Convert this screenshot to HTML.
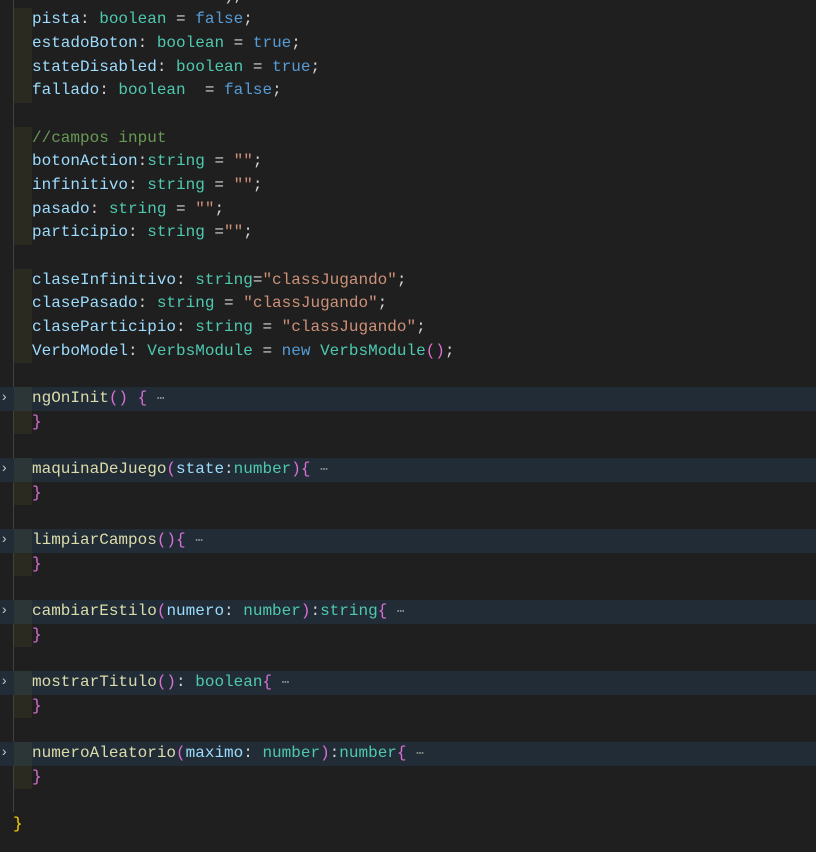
<!DOCTYPE html>
<html><head><meta charset="utf-8"><style>
html,body{margin:0;padding:0;background:#1f1f1f;width:816px;height:852px;overflow:hidden}
#ed{position:absolute;left:0;top:-15.5px;width:816px;font-family:"Liberation Mono",monospace;font-size:16px;color:#d4d4d4}
.l{position:relative;height:23.68px;line-height:23.68px;white-space:pre;padding-left:32px}
.l.i::before{content:"";position:absolute;left:14px;top:0;width:18px;height:100%;background:#2a2a21}
.l.f{background:#222c36}
.l.f::before{content:"";position:absolute;left:14px;top:0;width:18px;height:100%;background:#2c3636}
.l.f::after{content:"›";position:absolute;left:0;top:0;color:#c5c5c5;font-size:14px;line-height:23.68px}
.guide{position:absolute;left:13px;top:0;width:1px;height:812px;background:#404040}
.p{color:#9cdcfe}.t{color:#4ec9b0}.k{color:#569cd6}.s{color:#ce9178}.c{color:#6a9955}.fn{color:#dcdcaa}.o{color:#da70d6}.g{color:#ffd700}.d{color:#8c8c8c;font-size:13px}
</style></head><body>
<div class="guide"></div>
<div id="ed">
<div class="l">                    ),</div>
<div class="l i"><span class="p">pista</span>: <span class="t">boolean</span> = <span class="k">false</span>;</div>
<div class="l i"><span class="p">estadoBoton</span>: <span class="t">boolean</span> = <span class="k">true</span>;</div>
<div class="l i"><span class="p">stateDisabled</span>: <span class="t">boolean</span> = <span class="k">true</span>;</div>
<div class="l i"><span class="p">fallado</span>: <span class="t">boolean</span>  = <span class="k">false</span>;</div>
<div class="l"></div>
<div class="l i"><span class="c">//campos input</span></div>
<div class="l i"><span class="p">botonAction</span>:<span class="t">string</span> = <span class="s">""</span>;</div>
<div class="l i"><span class="p">infinitivo</span>: <span class="t">string</span> = <span class="s">""</span>;</div>
<div class="l i"><span class="p">pasado</span>: <span class="t">string</span> = <span class="s">""</span>;</div>
<div class="l i"><span class="p">participio</span>: <span class="t">string</span> =<span class="s">""</span>;</div>
<div class="l"></div>
<div class="l i"><span class="p">claseInfinitivo</span>: <span class="t">string</span>=<span class="s">"classJugando"</span>;</div>
<div class="l i"><span class="p">clasePasado</span>: <span class="t">string</span> = <span class="s">"classJugando"</span>;</div>
<div class="l i"><span class="p">claseParticipio</span>: <span class="t">string</span> = <span class="s">"classJugando"</span>;</div>
<div class="l i"><span class="p">VerboModel</span>: <span class="t">VerbsModule</span> = <span class="k">new</span> <span class="t">VerbsModule</span><span class="o">()</span>;</div>
<div class="l"></div>
<div class="l f"><span class="fn">ngOnInit</span><span class="o">()</span> <span class="o">{</span> <span class="d">⋯</span></div>
<div class="l i"><span class="o">}</span></div>
<div class="l"></div>
<div class="l f"><span class="fn">maquinaDeJuego</span><span class="o">(</span><span class="p">state</span>:<span class="t">number</span><span class="o">){</span> <span class="d">⋯</span></div>
<div class="l i"><span class="o">}</span></div>
<div class="l"></div>
<div class="l f"><span class="fn">limpiarCampos</span><span class="o">(){</span> <span class="d">⋯</span></div>
<div class="l i"><span class="o">}</span></div>
<div class="l"></div>
<div class="l f"><span class="fn">cambiarEstilo</span><span class="o">(</span><span class="p">numero</span>: <span class="t">number</span><span class="o">)</span>:<span class="t">string</span><span class="o">{</span> <span class="d">⋯</span></div>
<div class="l i"><span class="o">}</span></div>
<div class="l"></div>
<div class="l f"><span class="fn">mostrarTitulo</span><span class="o">()</span>: <span class="t">boolean</span><span class="o">{</span> <span class="d">⋯</span></div>
<div class="l i"><span class="o">}</span></div>
<div class="l"></div>
<div class="l f"><span class="fn">numeroAleatorio</span><span class="o">(</span><span class="p">maximo</span>: <span class="t">number</span><span class="o">)</span>:<span class="t">number</span><span class="o">{</span> <span class="d">⋯</span></div>
<div class="l i"><span class="o">}</span></div>
<div class="l"></div>
<div class="l" style="padding-left:13px"><span class="g">}</span></div>
</div>
</body></html>
